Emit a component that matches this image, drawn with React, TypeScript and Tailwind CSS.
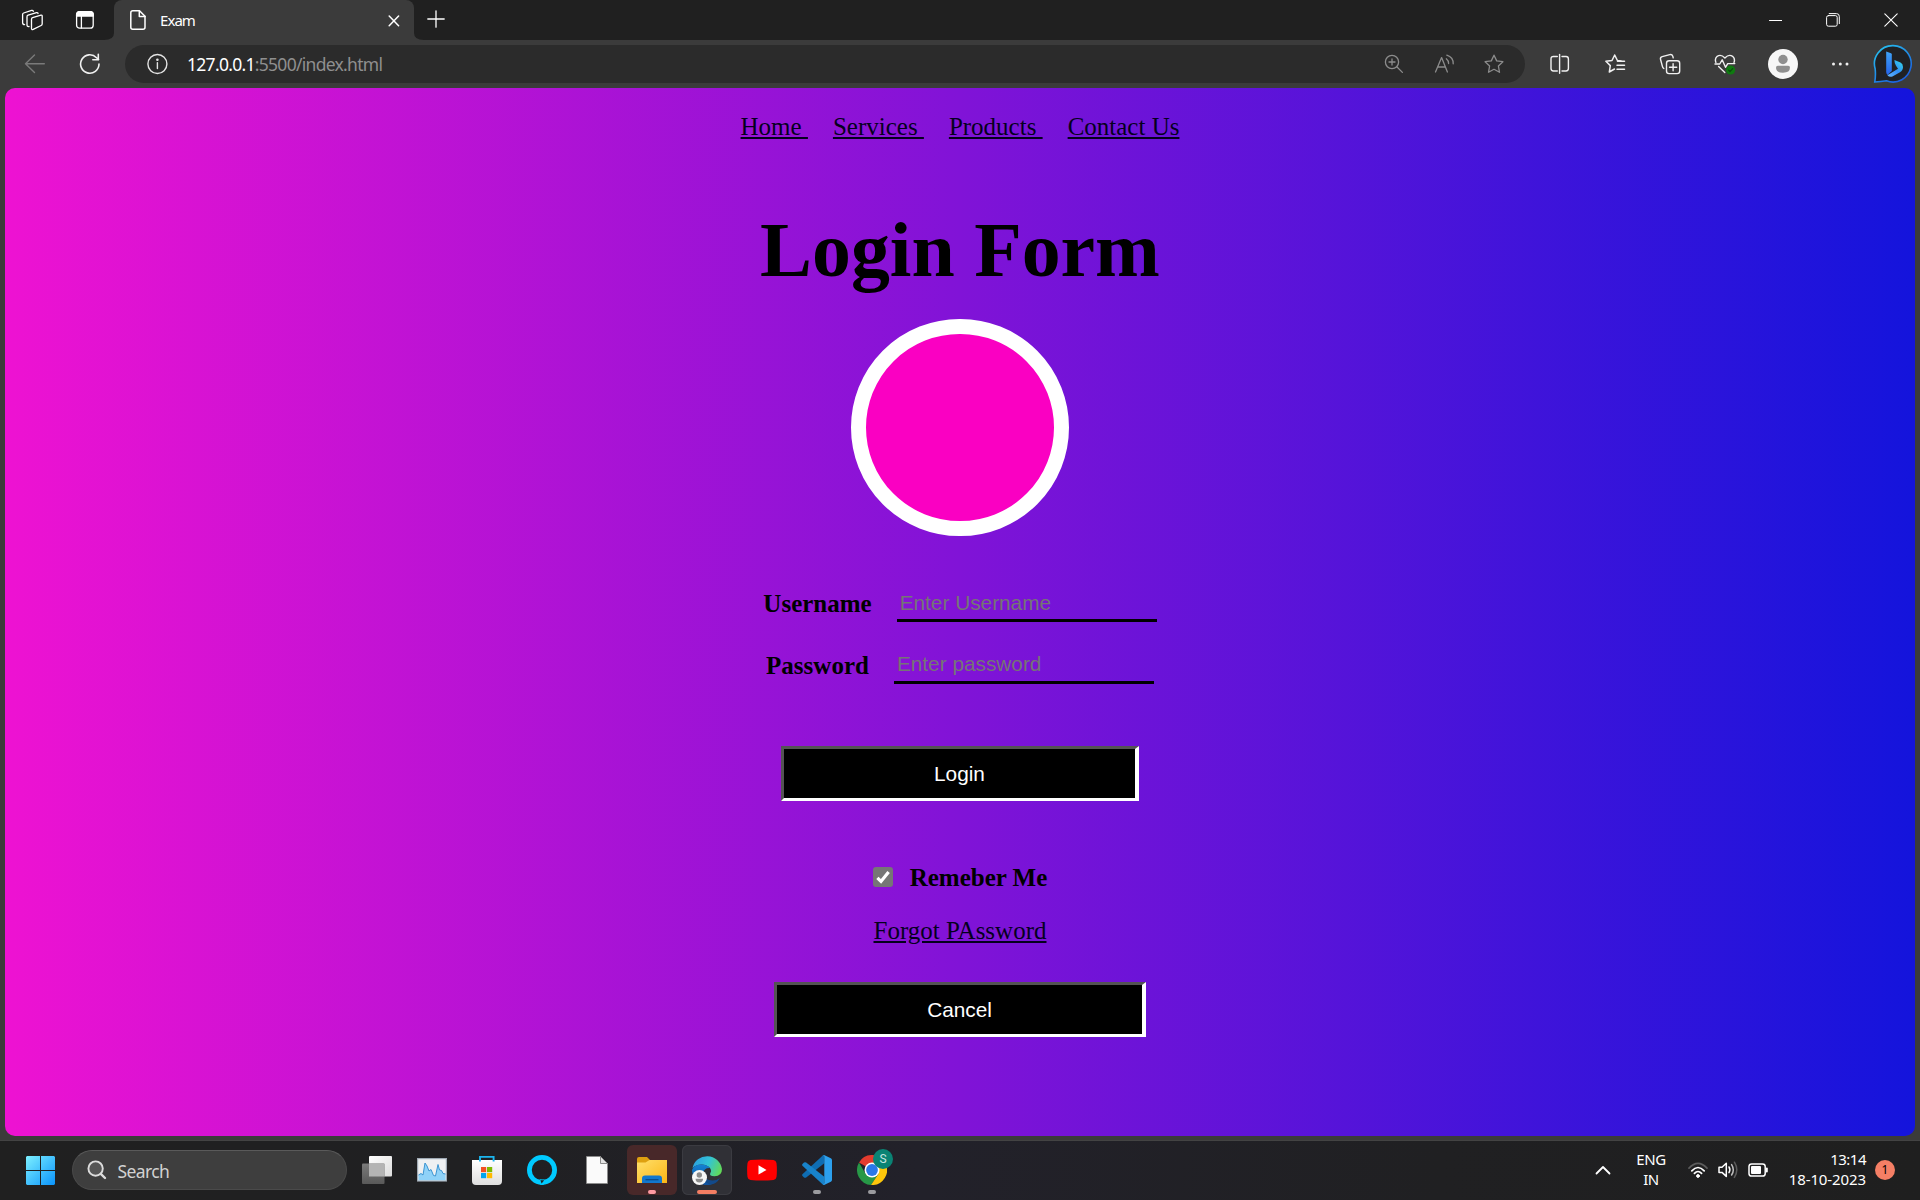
import React from "react";

type IconProps = {
  w: number;
  h: number;
  className?: string;
  sw?: number;
  children: React.ReactNode;
};

function Icon({ w, h, className = "", sw = 1.3, children }: IconProps) {
  return (
    <svg
      width={w}
      height={h}
      viewBox={`0 0 ${w} ${h}`}
      className={`shrink-0 ${className}`}
      fill="none"
      stroke="currentColor"
      strokeWidth={sw}
      strokeLinecap="round"
      strokeLinejoin="round"
    >
      {children}
    </svg>
  );
}

function TitleBar() {
  return (
    <div className="flex h-10 w-full bg-[#202020] text-white">
      <Icon w={22} h={22} className="mt-[9px] ml-[21px]">
        <path d="M10.5 10.2 Q10.5 9 11.6 8.6 L20 6.2 Q21.2 6 21.2 7.2 V14.8 Q21.2 16 20.1 16.5 L12.2 20.4 Q10.5 21 10.5 19.3 Z" />
        <path d="M8 17.5 Q6 17.8 6 15.8 V7.8 Q6 6.6 7.1 6.2 L15.5 3.6 Q17 3.3 17 4.6" />
        <path d="M3.6 15.6 Q1.6 15.6 1.6 13.8 V5.6 Q1.6 4.4 2.7 4 L10.6 1.4 Q12.2 1 12.3 2.4" />
      </Icon>
      <Icon w={20} h={20} className="mt-[10px] ml-[32px]">
        <rect x="1.6" y="1.6" width="16.6" height="16.6" rx="3" />
        <path d="M1.6 6 V4.6 Q1.6 1.6 4.6 1.6 H15.2 Q18.2 1.6 18.2 4.6 V6 Z" fill="currentColor" />
        <path d="M6.4 6 V18" />
      </Icon>
      <svg width="19" height="40" viewBox="0 0 19 40" className="shrink-0">
        <path d="M19 33 V40 H9 Q19 40 19 33 Z" fill="#3b3b3b" />
      </svg>
      <div className="flex h-10 w-[300px] items-center rounded-t-lg bg-[#3b3b3b]">
        <Icon w={18} h={22} className="ml-[15px]" sw={1.5}>
          <path d="M3.8 1.8 H10.5 L16 7.3 V18.2 Q16 20.2 14 20.2 H3.8 Q1.8 20.2 1.8 18.2 V3.8 Q1.8 1.8 3.8 1.8 Z" />
          <path d="M10.3 2 V7.5 H16" />
        </Icon>
        <span className="ml-[13px] w-[225px] font-['Noto_Sans',sans-serif] text-[15px] leading-5 tracking-[-0.95px]">
          Exam
        </span>
        <Icon w={12} h={12} className="mt-[2px] ml-[3px]" sw={1.5}>
          <path d="M1.2 1 L10.6 10.8 M10.6 1 L1.2 10.8" />
        </Icon>
      </div>
      <svg width="10" height="40" viewBox="0 0 10 40" className="shrink-0">
        <path d="M0 33 V40 H10 Q0 40 0 33 Z" fill="#3b3b3b" />
      </svg>
      <Icon w={18} h={18} className="mt-[10px] ml-[3px]">
        <path d="M9 .8 V17.2 M.8 9 H17.2" />
      </Icon>
      <div className="ml-auto flex h-10 items-center gap-[44px] pr-[22px]">
        <Icon w={13} h={13} sw={1}>
          <path d="M.5 6.5 H13" />
        </Icon>
        <Icon w={14} h={14} sw={1}>
          <rect x=".6" y="2.6" width="10.6" height="10.6" rx="1.8" />
          <path d="M3.2 .6 H10.5 Q13.3 .6 13.3 3.4 V10.6" />
        </Icon>
        <Icon w={14} h={14} sw={1.1}>
          <path d="M.8 .8 L13.2 13.2 M13.2 .8 L.8 13.2" />
        </Icon>
      </div>
    </div>
  );
}

const STAR = "M10 1.2 L12.7 6.9 L18.9 7.7 L14.4 12 L15.5 18.3 L10 15.3 L4.5 18.3 L5.6 12 L1.1 7.7 L7.3 6.9 Z";

function Toolbar() {
  return (
    <div className="flex h-12 w-full items-center bg-[#3b3b3b] text-[#f0f0f0]">
      <Icon w={22} h={20} className="mb-[1px] ml-[24px] text-[#7a7a7a]" sw={1.4}>
        <path d="M20.3 9.7 H1.5 M10.5 1 L1.5 9.7 L10.5 18.4" />
      </Icon>
      <Icon w={22} h={22} className="mb-[1px] ml-[33px]" sw={1.6}>
        <path d="M20 11 A9.2 9.2 0 1 1 17.5 4.7 L19.5 6.5" />
        <path d="M19.3 1.2 V6.7 H13.8" />
      </Icon>
      <div className="ml-[24px] flex h-[38px] w-[1400px] items-center rounded-full bg-[#2b2b2b]">
        <Icon w={22} h={22} className="ml-[21px] text-[#e4e4e4]" sw={1.4}>
          <circle cx="11.4" cy="11" r="9.5" />
          <path d="M11.4 9.8 V15.5" />
          <circle cx="11.4" cy="6.8" r=".6" fill="currentColor" />
        </Icon>
        <span className="ml-[19px] font-['Noto_Sans',sans-serif] text-[17.5px] leading-6 tracking-[-0.71px] text-white">
          127.0.0.1<span className="text-[#8f8f8f]">:5500/index.html</span>
        </span>
        <div className="ml-auto flex items-center pr-[21px] text-[#8c8c8c]">
          <Icon w={20} h={20}>
            <circle cx="8" cy="8" r="6.6" />
            <path d="M12.8 12.8 L18.4 18.4 M8 5 V11 M5 8 H11" />
          </Icon>
          <Icon w={22} h={20} className="ml-[30px]">
            <path d="M1.5 18 L7.6 3.6 L13.4 18 M3.6 13 H11.4" />
            <path d="M12.3 4.8 Q14.6 6.6 14.6 9.6 M12.8 1.2 Q19.4 3.2 19.2 9.8" />
          </Icon>
          <Icon w={20} h={20} className="ml-[28px]">
            <path d={STAR} />
          </Icon>
        </div>
      </div>
      <Icon w={22} h={22} className="ml-[24px]" sw={1.4}>
        <path d="M8.3 3.5 H4.4 Q2 3.5 2 5.9 V15.6 Q2 18 4.4 18 H8.3 M13 3.5 H17 Q19.4 3.5 19.4 5.9 V15.6 Q19.4 18 17 18 H13" />
        <path d="M10.6 1.4 V20.2" />
      </Icon>
      <Icon w={22} h={22} className="ml-[33px]" sw={1.5}>
        <path d="M17 8 L13.4 7.5 L10.7 2 L8 7.5 L1.9 8.3 L6.3 12.6 L5.3 19 L10.5 16" />
        <path d="M13.5 8.3 H20.5 M13 12.2 H20.5 M13 16.2 H20.5" />
      </Icon>
      <Icon w={22} h={22} className="ml-[33px]" sw={1.4}>
        <rect x="7.5" y="7.8" width="13.2" height="12.8" rx="2.6" />
        <path d="M14.1 10.6 V17.8 M10.5 14.2 H17.7" />
        <path d="M4.8 15.5 Q3.7 14.8 3.4 13.4 L1.5 6.3 Q1 4.2 3.2 3.6 L10.8 1.6 Q13 1 13.8 3.2 L14.2 4.8" />
      </Icon>
      <Icon w={22} h={22} className="ml-[33px]" sw={1.4}>
        <path d="M1.9 9.5 Q.4 5.8 3.2 3.3 Q7 .8 10.9 5 Q14.8 .8 18.6 3.3 Q21.4 5.8 20 9.5" />
        <path d="M1 11 H5.7 L8.2 6.8 L11.5 14.3 L13.7 10.6 H20.8 M4.6 13.4 L10.8 19.6" />
        <circle cx="16.6" cy="17" r="4.6" fill="#0f7a10" stroke="none" />
        <path d="M14.6 17.1 L16 18.5 L18.7 15.6" stroke="#0a4d0c" strokeWidth="1.2" />
      </Icon>
      <svg width="30" height="30" viewBox="0 0 30 30" className="ml-[32px] shrink-0">
        <circle cx="15" cy="15" r="15" fill="#f7f7f7" />
        <circle cx="15" cy="10.5" r="4.7" fill="#8f8f8f" />
        <path d="M9.8 16.8 H20.2 Q22 16.8 22 18.6 Q22 23.8 15 23.8 Q8 23.8 8 18.6 Q8 16.8 9.8 16.8 Z" fill="#8f8f8f" />
      </svg>
      <svg width="22" height="6" viewBox="0 0 22 6" className="ml-[31px] shrink-0" fill="#f0f0f0">
        <circle cx="4.5" cy="3" r="1.5" />
        <circle cx="11.3" cy="3" r="1.5" />
        <circle cx="18" cy="3" r="1.5" />
      </svg>
      <svg width="40" height="40" viewBox="0 0 40 40" className="ml-[22px] shrink-0">
        <defs>
          <linearGradient id="ring" x1="0" y1="0" x2=".7" y2="1">
            <stop offset="0" stopColor="#27c8f0" />
            <stop offset="1" stopColor="#1b5fe0" />
          </linearGradient>
          <linearGradient id="bstem" x1="0" y1="0" x2="0" y2="1">
            <stop offset="0" stopColor="#3fa4f8" />
            <stop offset="1" stopColor="#2463ea" />
          </linearGradient>
          <linearGradient id="bbowl" x1="1" y1="0" x2="0" y2="1">
            <stop offset="0" stopColor="#35e0e8" />
            <stop offset=".5" stopColor="#2f8df5" />
            <stop offset="1" stopColor="#64b4ff" />
          </linearGradient>
        </defs>
        <path
          d="M20.2 1.6 A18.2 18.2 0 1 1 13.5 36.8 Q8 37.5 1.8 38 Q2.8 32 2.2 25 A18.2 18.2 0 0 1 20.2 1.6 Z"
          fill="#202124"
          stroke="url(#ring)"
          strokeWidth="1.6"
        />
        <path d="M13.2 7.4 L18 9.2 Q18.8 9.6 18.8 10.6 V27 L14.4 31 Q13.2 29.6 13.2 28 Z" fill="url(#bstem)" />
        <path d="M21.4 16 L27.5 18.4 Q30 19.8 30 23 Q30 26.4 27 28.2 L19.4 32.4 Q16.4 33.4 14.4 31.2 L25 24.8 L23 21.8 Q21.2 18.2 21.4 16 Z" fill="url(#bbowl)" />
      </svg>
    </div>
  );
}

function LoginPage() {
  return (
    <main className="flex h-[1048px] w-[1910px] flex-col items-center rounded-[10px] bg-[linear-gradient(90deg,#ee12d2_0%,#1414dc_100%)] font-['Liberation_Serif',serif] text-[25px] leading-7 text-black">
      <nav className="mt-[25px] flex gap-[25px] text-[#05001e]">
        {["Home ", "Services ", "Products ", "Contact Us"].map((t) => (
          <a key={t} href="#" className="whitespace-pre underline">
            {t}
          </a>
        ))}
      </nav>
      <h1 className="mt-[64px] text-[77.8px] leading-[90px] font-bold">Login Form</h1>
      <div className="mt-[24px] h-[217px] w-[218px] rounded-full border-[15px] border-white bg-[#fa00c2]" />
      <div className="mt-[52px] flex h-[34px] items-end gap-[25px]">
        <label className="pb-1 font-bold">Username</label>
        <input
          placeholder="Enter Username"
          className="h-[34px] w-[260px] border-b-[3px] border-black bg-transparent pt-[3px] pb-[4px] pl-[3px] font-['Liberation_Sans',sans-serif] text-[20.8px] leading-6 outline-none placeholder:text-[#757575]"
        />
      </div>
      <div className="mt-[28px] flex h-[34px] items-end gap-[25px]">
        <label className="pb-1 font-bold">Password</label>
        <input
          type="password"
          placeholder="Enter password"
          className="h-[34px] w-[260px] border-b-[3px] border-black bg-transparent pt-[2px] pb-[5px] pl-[3px] font-['Liberation_Sans',sans-serif] text-[20.8px] leading-6 outline-none placeholder:text-[#757575]"
        />
      </div>
      <button className="mt-[62px] h-[55px] w-[358px] border-[3px] border-r-4 border-t-[#545454] border-r-white border-b-white border-l-[#545454] bg-black font-['Liberation_Sans',sans-serif] text-[20.8px] text-white">
        Login
      </button>
      <div className="mt-[63px] flex h-7 items-center">
        <span className="mr-[17px] mb-[2px] flex size-5 items-center justify-center rounded-[3px] bg-[#767676]">
          <Icon w={20} h={20} className="text-white" sw={3.2}>
            <path d="M4.4 10.8 L8 14.4 L15.6 5" strokeLinecap="butt" strokeLinejoin="miter" />
          </Icon>
        </span>
        <label className="font-bold">Remeber Me</label>
      </div>
      <a href="#" className="mt-[25px] text-[#05001e] underline">
        Forgot PAssword
      </a>
      <button className="mt-[37px] h-[55px] w-[372px] border-[3px] border-r-4 border-t-[#545454] border-r-white border-b-white border-l-[#545454] bg-black font-['Liberation_Sans',sans-serif] text-[20.8px] text-white">
        Cancel
      </button>
    </main>
  );
}

type CellProps = { tile?: string; bar?: string; children: React.ReactNode };

function Cell({ tile = "", bar, children }: CellProps) {
  return (
    <div className={`relative flex size-[50px] shrink-0 items-center justify-center rounded-md ${tile}`}>
      {children}
      {bar && <span className={`absolute bottom-[1px] h-1 rounded-full ${bar}`} />}
    </div>
  );
}

function TaskbarApps() {
  return (
    <div className="ml-[5px] flex gap-[5px]">
      <Cell>
        <svg width="30" height="30" viewBox="0 0 30 30">
          <defs>
            <linearGradient id="tvw" x1="0" y1="0" x2="1" y2="1">
              <stop offset="0" stopColor="#fff" />
              <stop offset="1" stopColor="#dcdcdc" />
            </linearGradient>
            <linearGradient id="tvg" x1="0" y1="0" x2="0" y2="1">
              <stop offset="0" stopColor="#7a7a7a" />
              <stop offset="1" stopColor="#595959" />
            </linearGradient>
          </defs>
          <rect x="7" y="1" width="23" height="20.5" rx="1" fill="url(#tvw)" />
          <rect x="0" y="8.5" width="22.5" height="20.5" rx="1" fill="url(#tvg)" />
          <path d="M7 8.5 H22.5 V21.5 H7 Z" fill="#b4b4b4" />
        </svg>
      </Cell>
      <Cell>
        <svg width="30" height="24" viewBox="0 0 30 24">
          <rect x=".6" y=".6" width="28.8" height="22.4" fill="#eef0f2" stroke="#9fa9b3" strokeWidth="1.2" />
          <path d="M1.5 17 L4 15.5 L6 17 L8 5 L10 8 L12 13 L14 11.5 L16.5 17.5 L18.5 18 L21 6.5 L22.5 12 L24.5 12.5 L26 15.5 L28.5 16 V22.3 H1.5 Z" fill="#8fd2f8" />
          <path d="M1.5 17 L4 15.5 L6 17 L8 5 L10 8 L12 13 L14 11.5 L16.5 17.5 L18.5 18 L21 6.5 L22.5 12 L24.5 12.5 L26 15.5 L28.5 16" fill="none" stroke="#3b94d1" strokeWidth="1" />
        </svg>
      </Cell>
      <Cell>
        <svg width="30" height="30" viewBox="0 0 30 30">
          <defs>
            <linearGradient id="store" x1="0" y1="0" x2="0" y2="1">
              <stop offset="0" stopColor="#fff" />
              <stop offset="1" stopColor="#dedede" />
            </linearGradient>
          </defs>
          <path d="M0 5 H30 V26 Q30 30 26 30 H4 Q0 30 0 26 Z" fill="url(#store)" />
          <path d="M8 6.5 V1.9 H21.6 V6.5" fill="none" stroke="#1bb5ee" strokeWidth="1.9" />
          <rect x="9" y="12" width="5.2" height="5.2" fill="#f25022" />
          <rect x="15" y="12" width="5.2" height="5.2" fill="#7fba00" />
          <rect x="9" y="18" width="5.2" height="5.2" fill="#00a4ef" />
          <rect x="15" y="18" width="5.2" height="5.2" fill="#ffb900" />
        </svg>
      </Cell>
      <Cell>
        <svg width="30" height="30" viewBox="0 0 30 30">
          <circle cx="15" cy="15" r="12.6" fill="none" stroke="#00caff" strokeWidth="4.8" />
          <path d="M12.6 24.2 Q13.8 25 13.4 29.9 L17 29.7 Q14.4 27.5 17.6 24.6 Z" fill="#00caff" />
          <path d="M13.4 25.2 L14.6 28.6 L17.2 25.2 Z" fill="#202022" />
        </svg>
      </Cell>
      <Cell>
        <svg width="22" height="28" viewBox="0 0 22 28">
          <path d="M.5 .5 H14.5 L21.5 7.5 V27.5 H.5 Z" fill="#fafafa" stroke="#8c8c8c" strokeWidth=".8" />
          <path d="M14.5 .5 V7.5 H21.5 Z" fill="#e4e4e4" stroke="#8c8c8c" strokeWidth="1" />
        </svg>
      </Cell>
      <Cell tile="bg-[#482829]" bar="w-2 bg-[#ff9aa2]">
        <svg width="30" height="28" viewBox="0 0 30 28">
          <defs>
            <linearGradient id="fold" x1="0" y1="0" x2="1" y2="1">
              <stop offset="0" stopColor="#ffdf6b" />
              <stop offset="1" stopColor="#fbb615" />
            </linearGradient>
          </defs>
          <path d="M0 3 Q0 1 2 1 H10 L13.5 4.5 V9 H0 Z" fill="#dea010" />
          <path d="M0 6.5 H8.5 L12.5 4 H30 V27 H0 Z" fill="url(#fold)" />
          <path d="M5 27 V22.5 Q5 19.5 8 19.5 H22 Q25 19.5 25 22.5 V27 Z" fill="#1277cd" />
          <path d="M8.5 23.7 H21.5" stroke="#0b4a8a" strokeWidth="1.3" />
        </svg>
      </Cell>
      <Cell tile="bg-[#303036] ring-1 ring-inset ring-[#3b3b41]" bar="w-5 bg-[#f47e63]">
        <svg width="30" height="30" viewBox="0 0 30 30">
          <defs>
            <linearGradient id="eg1" x1="0" y1=".3" x2="1" y2=".6">
              <stop offset="0" stopColor="#2b9fe0" />
              <stop offset=".5" stopColor="#33c3d6" />
              <stop offset="1" stopColor="#62d957" />
            </linearGradient>
            <linearGradient id="eg2" x1="0" y1="0" x2="0" y2="1">
              <stop offset="0" stopColor="#1382d4" />
              <stop offset="1" stopColor="#0f4f9c" />
            </linearGradient>
          </defs>
          <path d="M.5 13 A15 15 0 0 1 30 14 Q30 21.3 22.5 21.3 Q17 21.2 18.3 18 Q20 16 18 13 Q15 9.5 9.5 9.5 Q4 9.5 .5 13 Z" fill="url(#eg1)" />
          <path d="M0 15 Q2 9.5 9.5 9.5 Q15 9.5 18 13 Q12 12.5 11 18.5 Q11 28 20 29.2 A15 15 0 0 1 0 15 Z" fill="url(#eg2)" />
          <path d="M11 18.5 Q12.5 25.5 20.5 25.5 Q24.5 25.5 28 23 Q24.5 29 18.5 29.6 Q11 28 11 18.5 Z" fill="#124a8b" />
        </svg>
        <svg width="15" height="15" viewBox="0 0 15 15" className="absolute bottom-[10px] left-[10px]">
          <circle cx="7.5" cy="7.5" r="7.5" fill="#f7f7f7" />
          <circle cx="7.3" cy="5" r="2.7" fill="#8c8c8c" />
          <path d="M3.6 8.7 H11 Q11.2 12.4 7.3 12.4 Q3.4 12.4 3.6 8.7 Z" fill="#8c8c8c" />
        </svg>
      </Cell>
      <Cell>
        <svg width="30" height="22" viewBox="0 0 30 22" className="mb-[1px]">
          <path d="M3.5 1 Q15 0 26.5 1 Q29 1.3 29.5 4 Q30.3 11 29.5 18 Q29 20.8 26.5 21 Q15 22 3.5 21 Q1 20.8 .5 18 Q-.3 11 .5 4 Q1 1.3 3.5 1 Z" fill="#fe0000" />
          <path d="M11.5 6.3 L19.5 11 L11.5 15.5 Z" fill="#fff" />
        </svg>
      </Cell>
      <Cell bar="w-2 bg-[#9b9b9f]">
        <svg width="30" height="30" viewBox="0 0 30 30">
          <path d="M22 .2 L22.3 8.3 L4.2 22.5 Q3 23.2 2 22.4 L.5 21 Q-.4 20 .7 18.9 L20.5 .8 Q21.2 .2 22 .2 Z" fill="#0f6db3" />
          <path d="M22 29.8 L22.3 21.7 L4.2 7.5 Q3 6.8 2 7.6 L.5 9 Q-.4 10 .7 11.1 L20.5 29.2 Q21.2 29.8 22 29.8 Z" fill="#1883cb" />
          <path d="M20.4 .7 Q21.3 -.2 22.6 .3 L28.8 3.2 Q30 3.8 30 5.2 V24.8 Q30 26.2 28.8 26.8 L22.6 29.7 Q21.3 30.2 20.4 29.3 Q22.2 30 22.3 28 V2 Q22.2 0 20.4 .7 Z" fill="#2ca0ee" />
        </svg>
      </Cell>
      <Cell bar="w-2 bg-[#9b9b9f]">
        <svg width="30" height="30" viewBox="0 0 30 30">
          <path d="M15 15 L2 7.5 A15 15 0 0 1 28 7.5 H15 Z" fill="#e33b2e" />
          <path d="M15 15 L21.5 18.7 L14 30 A15 15 0 0 1 2 7.5 L8.5 18.7 Z" fill="#279847" />
          <path d="M15 7.5 H28 A15 15 0 0 1 14 30 L21.5 18.7 Z" fill="#fdc60b" />
          <circle cx="15" cy="15" r="7.5" fill="#fff" />
          <circle cx="15" cy="15" r="5.9" fill="#2a78e8" />
        </svg>
        <span className="absolute top-[4px] left-[26px] flex size-5 items-center justify-center rounded-full bg-[#0a8374] font-['Roboto',sans-serif] text-[12px] leading-none text-[#c8e4e0]">
          S
        </span>
      </Cell>
    </div>
  );
}

function Taskbar() {
  return (
    <div className="flex h-[60px] w-full items-center border-t border-[#434343] bg-[linear-gradient(90deg,#202020_0%,#202022_25%,#22212a_48%,#202022_75%,#1f1f1f_100%)] pb-px font-['Noto_Sans',sans-serif] text-white">
      <svg width="29" height="29" viewBox="0 0 29 29" className="ml-[26px] shrink-0">
        <defs>
          <linearGradient id="win" x1="0" y1="0" x2="29" y2="29" gradientUnits="userSpaceOnUse">
            <stop offset="0" stopColor="#7df0ff" />
            <stop offset="1" stopColor="#0a93fb" />
          </linearGradient>
        </defs>
        <path d="M1 0 H14 V14 H0 V1 Z M15 0 H28 L29 1 V14 H15 Z M0 15 H14 V29 H1 L0 28 Z M15 15 H29 V28 L28 29 H15 Z" fill="url(#win)" />
      </svg>
      <div className="ml-[17px] flex h-10 w-[275px] items-center rounded-full border border-[#4a4a4a] border-t-[#5a5a5a] bg-[#3e3e3e]">
        <Icon w={20} h={20} className="ml-[14px] text-[#dcdcdc]" sw={1.9}>
          <circle cx="8.6" cy="8.6" r="7.2" fill="#555" />
          <path d="M13.8 13.8 L18 18" strokeWidth="2.4" />
        </Icon>
        <span className="mt-[1px] ml-[10.5px] text-[17.5px] leading-6 tracking-[-0.6px] text-[#d2d2d2]">Search</span>
      </div>
      <TaskbarApps />
      <div className="ml-auto flex items-center pr-[25px]">
        <Icon w={16} h={10} sw={1.8}>
          <path d="M1.5 8.5 L8 2 L14.5 8.5" />
        </Icon>
        <div className="mb-[2px] ml-[24px] flex w-[32px] flex-col items-center text-[15px] leading-5 tracking-[-0.4px]">
          <span>ENG</span>
          <span>IN</span>
        </div>
        <Icon w={20} h={17} className="ml-[21px]" sw={1.7}>
          <path d="M1 6.2 Q10 -3.4 19 6.2" stroke="#5c5c5c" />
          <path d="M3.8 8.8 Q10 2.2 16.2 8.8 M6.4 11.4 Q10 7.6 13.6 11.4" />
          <circle cx="10" cy="14" r="1.4" fill="currentColor" strokeWidth="1" />
        </Icon>
        <Icon w={21} h={18} className="ml-[10px]" sw={1.5}>
          <path d="M1 6.3 H4 L8.3 2.2 V15.4 L4 11.4 H1 Z" />
          <path d="M11 6 Q12.8 8.8 11 11.6" />
          <path d="M13.6 3.6 Q17 8.8 13.6 14" stroke="#bdbdbd" />
          <path d="M16.4 1.2 Q21.2 8.8 16.4 16.4" stroke="#5c5c5c" />
        </Icon>
        <Icon w={21} h={14} className="ml-[9px]" sw={1.5}>
          <rect x="1" y="1" width="16.2" height="12" rx="2.6" />
          <rect x="3" y="3" width="10" height="8" rx="1" fill="currentColor" stroke="none" />
          <path d="M18.8 5.6 V8.4" strokeWidth="2" />
        </Icon>
        <div className="mb-[3px] ml-[16px] flex w-[81px] flex-col items-end text-[15px] leading-5 tracking-[-0.1px]">
          <span className="tracking-[-0.5px]">13:14</span>
          <span>18-10-2023</span>
        </div>
        <span className="ml-[9px] flex size-5 items-center justify-center rounded-full bg-[#f57f65] text-[12px] leading-none text-black">
          1
        </span>
      </div>
    </div>
  );
}

export default function App() {
  return (
    <div className="flex h-[1200px] w-[1920px] flex-col overflow-hidden bg-[#3b3b3b]">
      <TitleBar />
      <Toolbar />
      <div className="flex h-[1052px] justify-center">
        <LoginPage />
      </div>
      <Taskbar />
    </div>
  );
}
